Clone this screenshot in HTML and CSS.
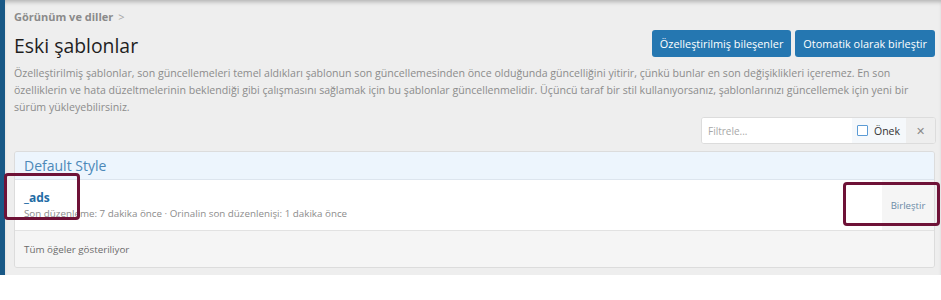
FILE: index.html
```html
<!DOCTYPE html>
<html lang="tr">
  <head>
    <meta charset="UTF-8" />
    <title>Eski şablonlar</title>
    <link rel="stylesheet" href="styles.css">
  </head>
  <body>
    <div class="page">
      <div class="breadcrumb">Görünüm ve diller <span class="crumb-sep">&gt;</span></div>
      <div class="title-row">
        <h1 class="title">Eski şablonlar</h1>
        <div class="title-buttons">
          <a href="#" class="button">Özelleştirilmiş bileşenler</a>
          <a href="#" class="button">Otomatik olarak birleştir</a>
        </div>
      </div>
      <p class="description">Özelleştirilmiş şablonlar, son güncellemeleri temel aldıkları şablonun son güncellemesinden önce olduğunda güncelliğini yitirir, çünkü bunlar en son değişiklikleri içeremez. En son özelliklerin ve hata düzeltmelerinin beklendiği gibi çalışmasını sağlamak için bu şablonlar güncellenmelidir. Üçüncü taraf bir stil kullanıyorsanız, şablonlarınızı güncellemek için yeni bir sürüm yükleyebilirsiniz.</p>
      <div class="filter-row">
        <div class="filter">
          <input type="text" class="filter-input" placeholder="Filtrele..." />
          <label class="filter-prefix"><span class="check"></span>Önek</label>
          <span class="filter-clear">&#x2715;</span>
        </div>
      </div>
      <div class="block">
        <h2 class="block-header">Default Style</h2>
        <div class="block-row">
          <div class="row-main">
            <a href="#" class="row-title">_ads</a>
            <div class="row-meta">Son düzenleme: 7 dakika önce · Orinalin son düzenlenişi: 1 dakika önce</div>
          </div>
          <a href="#" class="row-action">Birleştir</a>
        </div>
        <div class="block-footer">Tüm öğeler gösteriliyor</div>
      </div>
      <div class="mark mark-title"></div>
      <div class="mark mark-action"></div>
    </div>
  </body>
</html>
```

FILE: styles.css
```css
body {
  margin: 0;
  padding: 0;
  background-color: #fff;
  font-family: "Open Sans", "Noto Sans", sans-serif;
  color: #141414;
}

.page {
  position: relative;
  background-color: #eeeeee;
  border-left: 5px solid #185886;
  padding: 8px 5px 7px 9px;
  box-shadow: inset 0 4px 4px -2px rgba(0, 0, 0, 0.25);
}

.breadcrumb {
  font-size: 11px;
  font-weight: bold;
  color: #8a8a8a;
  height: 18px;
  line-height: 18px;
}

.crumb-sep {
  font-weight: normal;
  color: #a5a5a5;
  margin-left: 2px;
}

.title-row {
  display: flex;
  justify-content: space-between;
  align-items: center;
  margin-top: 1px;
  height: 31px;
}

.title {
  margin: 0;
  font-size: 19.4px;
  font-weight: normal;
  color: #1f1f1f;
  padding-top: 6px;
}

.title-buttons {
  display: flex;
  gap: 4px;
  margin-right: 1px;
  margin-top: 1px;
}

.button {
  display: inline-block;
  background-color: #2577b1;
  color: #fff;
  text-decoration: none;
  font-size: 10.9px;
  line-height: 27px;
  height: 27px;
  padding: 0 8px;
  border-radius: 3px;
}

.description {
  margin: 7px 0 0;
  font-size: 10.6px;
  line-height: 17px;
  color: #8c8c8c;
}

.filter-row {
  display: flex;
  justify-content: flex-end;
  margin-top: 1px;
}

.filter {
  display: flex;
  height: 25px;
  border: 1px solid #dcdcdc;
  border-radius: 3px;
  background-color: #fff;
  overflow: hidden;
}

.filter-input {
  width: 138px;
  border: none;
  padding: 0 6px;
  font-family: inherit;
  font-size: 10px;
  outline: none;
}

.filter-input::placeholder {
  color: #a8a8a8;
}

.filter-prefix {
  display: flex;
  align-items: center;
  background-color: #f5f8fb;
  padding: 0 6px 0 5px;
  font-size: 10.5px;
  color: #333;
}

.check {
  width: 9px;
  height: 9px;
  border: 1px solid #5b9bd5;
  border-radius: 1px;
  margin-right: 6px;
  background-color: #fff;
}

.filter-clear {
  display: flex;
  align-items: center;
  justify-content: center;
  width: 29px;
  background-color: #eeeeee;
  color: #8a8a8a;
  font-size: 11px;
}

.block {
  margin-top: 7px;
  margin-right: 1px;
  border: 1px solid #dcdcdc;
  border-radius: 3px;
  overflow: hidden;
}

.block-header {
  margin: 0;
  background-color: #edf5fd;
  border-bottom: 1px solid #dde5ee;
  font-size: 14px;
  font-weight: normal;
  color: #4c88b8;
  height: 27px;
  line-height: 27px;
  padding: 0 9px;
}

.block-row {
  display: flex;
  background-color: #fff;
  border-bottom: 1px solid #e2e2e2;
  height: 50px;
}

.row-main {
  flex: 1;
  padding: 10px 9px 0;
}

.row-title {
  display: block;
  font-size: 12px;
  font-weight: bold;
  color: #1f6ca5;
  text-decoration: none;
  line-height: 16px;
}

.row-meta {
  font-size: 9.8px;
  color: #8c8c8c;
  line-height: 16px;
}

.row-action {
  width: 52px;
  display: flex;
  align-items: center;
  justify-content: center;
  background-color: #f5f5f5;
  color: #6b8aa6;
  font-size: 9.6px;
  text-decoration: none;
}

.block-footer {
  background-color: #f5f5f5;
  height: 36px;
  line-height: 37px;
  padding: 0 9px;
  font-size: 9.8px;
  color: #6b6b6b;
}

.mark {
  position: absolute;
  border: 3px solid #6e1237;
  border-radius: 4px;
}

.mark-title {
  left: -1px;
  top: 173px;
  width: 70px;
  height: 41px;
}

.mark-action {
  left: 838px;
  top: 182px;
  width: 91px;
  height: 38px;
}
```
